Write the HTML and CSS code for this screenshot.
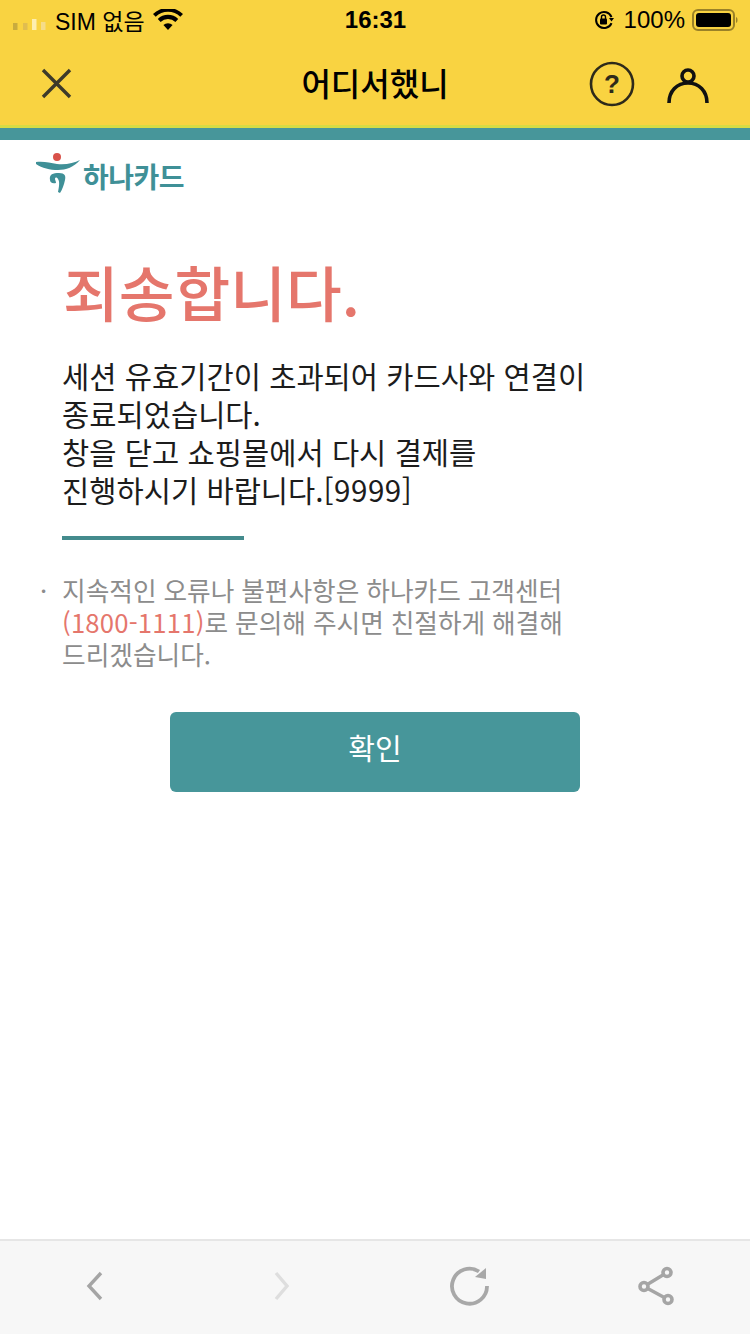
FILE: index.html
```html
<!DOCTYPE html>
<html lang="ko">
<head>
<meta charset="utf-8">
<title>어디서했니</title>
<link rel="stylesheet" href="styles.css">
</head>
<body>
<div class="page">
  <header class="top">
    <div class="status">
      <div class="status-left">
        <svg class="signal" width="34" height="14" viewBox="0 0 34 14"><rect x="0" y="7" width="4.500" height="7" fill="#c9ab3e"/><rect x="10" y="7" width="4.500" height="7" fill="#e0bd4f"/><rect x="19" y="3" width="4.500" height="11" fill="#fdeeb0"/><rect x="28" y="6" width="4.500" height="8" fill="#f5dc8a"/></svg>
        <span class="sim">SIM 없음</span>
        <svg class="wifi" width="30" height="22" viewBox="0 0 30 22"><path d="M15 21l-4.600-5a6.600 6.600 0 0 1 9.200 0zM7.600 13 4.800 10a14.600 14.600 0 0 1 20.400 0l-2.800 3a10.500 10.500 0 0 0-14.800 0zM2.700 7.800 0 5a21.500 21.500 0 0 1 30 0l-2.700 2.800a17.600 17.600 0 0 0-24.600 0z" fill="#000"/></svg>
      </div>
      <div class="time">16:31</div>
      <div class="status-right">
        <svg class="lock" width="22" height="22" viewBox="0 0 22 22"><path d="M18.500 8A8 8 0 1 0 18.500 14" fill="none" stroke="#000" stroke-width="2"/><path d="M16 9h5l-2.500 3.500z" fill="#000"/><rect x="7" y="9.500" width="7" height="6" rx="1" fill="#000"/><path d="M8.500 10V8a2 2 0 0 1 4 0v2" fill="none" stroke="#000" stroke-width="1.400"/></svg>
        <span class="pct">100%</span>
        <svg class="battery" width="46" height="24" viewBox="0 0 46 24"><rect x="1" y="2" width="41" height="20" rx="5" fill="none" stroke="#9a8128" stroke-width="2"/><rect x="4" y="5" width="35" height="14" rx="3" fill="#000"/><path d="M44 9c2 .5 2 5.500 0 6z" fill="#9a8128"/></svg>
      </div>
    </div>
    <div class="titlebar">
      <svg class="close" width="32" height="32" viewBox="0 0 32 32"><path d="M3 3 30 30M30 3 3 30" stroke="#3d3a2a" stroke-width="3.400" fill="none"/></svg>
      <h1 class="title">어디서했니</h1>
      <div class="actions">
        <svg class="help" width="46" height="46" viewBox="0 0 46 46"><circle cx="23" cy="23" r="21" fill="none" stroke="#2e2a1a" stroke-width="2.600"/><text x="23" y="32" text-anchor="middle" class="q">?</text></svg>
        <svg class="person" width="42" height="36" viewBox="0 0 42 36"><circle cx="21" cy="8" r="6" fill="none" stroke="#111" stroke-width="3.600"/><path d="M2 35c0-12 8-20 19-20s19 8 19 20" fill="none" stroke="#111" stroke-width="3.600"/></svg>
      </div>
    </div>
  </header>
  <main class="content">
    <div class="logo">
      <svg width="44" height="42" viewBox="0 0 44 42"><circle cx="21" cy="5" r="4" fill="#d9524a"/><path d="M0 10C8 9 14 11 21 12 30 13 38 11 44 8 38 15 30 18 22 18 14 18 6 16 0 12z" fill="#3f9097"/><path d="M14 28C13 22 17 21 23 21 29 21 30 24 29 28 28 33 26 38 24 41L22 40C23 35 24 30 22 27 21 25 19 25 19 27 19 28 20 29 20 31 16 32 14 30 14 28z" fill="#3f9097"/></svg>
      <span class="logo-text">하나카드</span>
    </div>
    <h2 class="heading">죄송합니다.</h2>
    <p class="message">세션 유효기간이 초과되어 카드사와 연결이<br>종료되었습니다.<br>창을 닫고 쇼핑몰에서 다시 결제를<br>진행하시기 바랍니다.<span class="code">[9999]</span></p>
    <div class="rule"></div>
    <p class="note">지속적인 오류나 불편사항은 하나카드 고객센터<br><span class="phone">(1800-1111)</span>로 문의해 주시면 친절하게 해결해<br>드리겠습니다.</p>
    <div class="btn-wrap"><button class="btn">확인</button></div>
  </main>
  <nav class="toolbar">
    <svg width="22" height="30" viewBox="0 0 22 30"><path d="M18 2 6 15l12 13" fill="none" stroke="#a5a5a5" stroke-width="3.400"/></svg>
    <svg width="22" height="30" viewBox="0 0 22 30"><path d="M6 2l11 13L6 28" fill="none" stroke="#dedede" stroke-width="3.400"/></svg>
    <svg width="40" height="40" viewBox="0 0 40 40"><path d="M38 20A17.500 17.500 0 1 1 30 5.500" fill="none" stroke="#a8a8a8" stroke-width="3.800"/><path d="M37 2v11L26 11z" fill="#a8a8a8"/></svg>
    <svg width="40" height="42" viewBox="0 0 40 42"><path d="M8 21.500 31 7.500M8 21.500 32 34.500" fill="none" stroke="#a5a5a5" stroke-width="3.400"/><circle cx="8" cy="21.500" r="4" fill="#f7f7f7" stroke="#a5a5a5" stroke-width="3.600"/><circle cx="31" cy="7.500" r="4" fill="#f7f7f7" stroke="#a5a5a5" stroke-width="3.600"/><circle cx="32" cy="34.500" r="4" fill="#f7f7f7" stroke="#a5a5a5" stroke-width="3.600"/></svg>
  </nav>
</div>
</body>
</html>
```
FILE: styles.css
```css
* { box-sizing: border-box; }
html, body { margin: 0; padding: 0; }
body { font-family: "Noto Sans CJK KR", "Liberation Sans", sans-serif; background: #fff; }
.page { width: 750px; height: 1334px; display: flex; flex-direction: column; overflow: hidden; }
.top { height: 140px; background: #f9d341; border-bottom: 12px solid #47969a; position: relative; }
.top::after { content: ""; position: absolute; left: 0; right: 0; bottom: 0; height: 3px; background: #d6dc44; }
.status { height: 40px; display: grid; grid-template-columns: 1fr auto 1fr; align-items: center; padding: 0 12px 0 13px; color: #000; font-family: "Liberation Sans", "Noto Sans CJK KR", sans-serif; font-size: 24px; }
.status-left { display: flex; align-items: center; gap: 9px; }
.signal { margin-top: 6px; margin-right: -1px; }
.wifi { margin-left: -1px; }
.sim { white-space: nowrap; font-size: 23px; }
.time { font-weight: 700; font-size: 24px; }
.status-right { display: flex; align-items: center; justify-content: flex-end; gap: 9px; }
.lock { margin-left: -2px; }
.pct { margin-right: -2px; }
.titlebar { height: 76px; padding: 10px 41px 0 40px; display: flex; align-items: center; justify-content: space-between; position: relative; }
.title { position: absolute; left: 0; right: 0; top: 8px; bottom: 0; margin: 0; display: flex; align-items: center; justify-content: center; font-size: 32px; font-weight: 500; color: #000; }
.actions { display: flex; align-items: center; gap: 32px; }
.help { margin-top: 2px; }
.person { margin-top: 6px; }
.q { font-family: "Liberation Sans", sans-serif; font-size: 26px; font-weight: 700; fill: #2e2a1a; }
.content { flex: 1; padding: 0 0 0 62px; }
.logo { display: flex; align-items: center; gap: 3px; margin: 12px 0 0 -26px; height: 42px; }
.logo-text { font-size: 28px; font-weight: 700; color: #3f9097; letter-spacing: -0.5px; line-height: 1; padding-top: 5px; }
.heading { margin: 55px 0 0 1px; font-size: 60.6px; font-weight: 500; line-height: 84px; color: #e5766c; }
.message { margin: 24px 0 0 0; font-size: 29.6px; font-weight: 400; line-height: 38px; color: #1c1c1c; }
.code { letter-spacing: 0.5px; }
.rule { width: 182px; height: 4px; background: #448b8d; margin-top: 27px; }
.note { margin: 34px 0 0 0; font-size: 25.7px; font-weight: 400; line-height: 32px; color: #8c8c8c; word-spacing: -0.3px; position: relative; }
.note::before { content: "·"; position: absolute; left: -22px; top: 0; }
.phone { color: #e5766c; letter-spacing: 0.2px; }
.btn-wrap { margin: 42px 0 0 108px; }
.btn { display: block; width: 410px; height: 80px; border: 0; border-radius: 6px; background: #47969a; color: #fff; font-family: inherit; font-size: 29px; font-weight: 400; padding: 0 0 10px 0; }
.toolbar { height: 95px; background: #f7f7f7; border-top: 2px solid #e6e6e6; display: grid; grid-template-columns: repeat(4, 1fr); align-items: center; justify-items: center; padding-bottom: 4px; }
```
